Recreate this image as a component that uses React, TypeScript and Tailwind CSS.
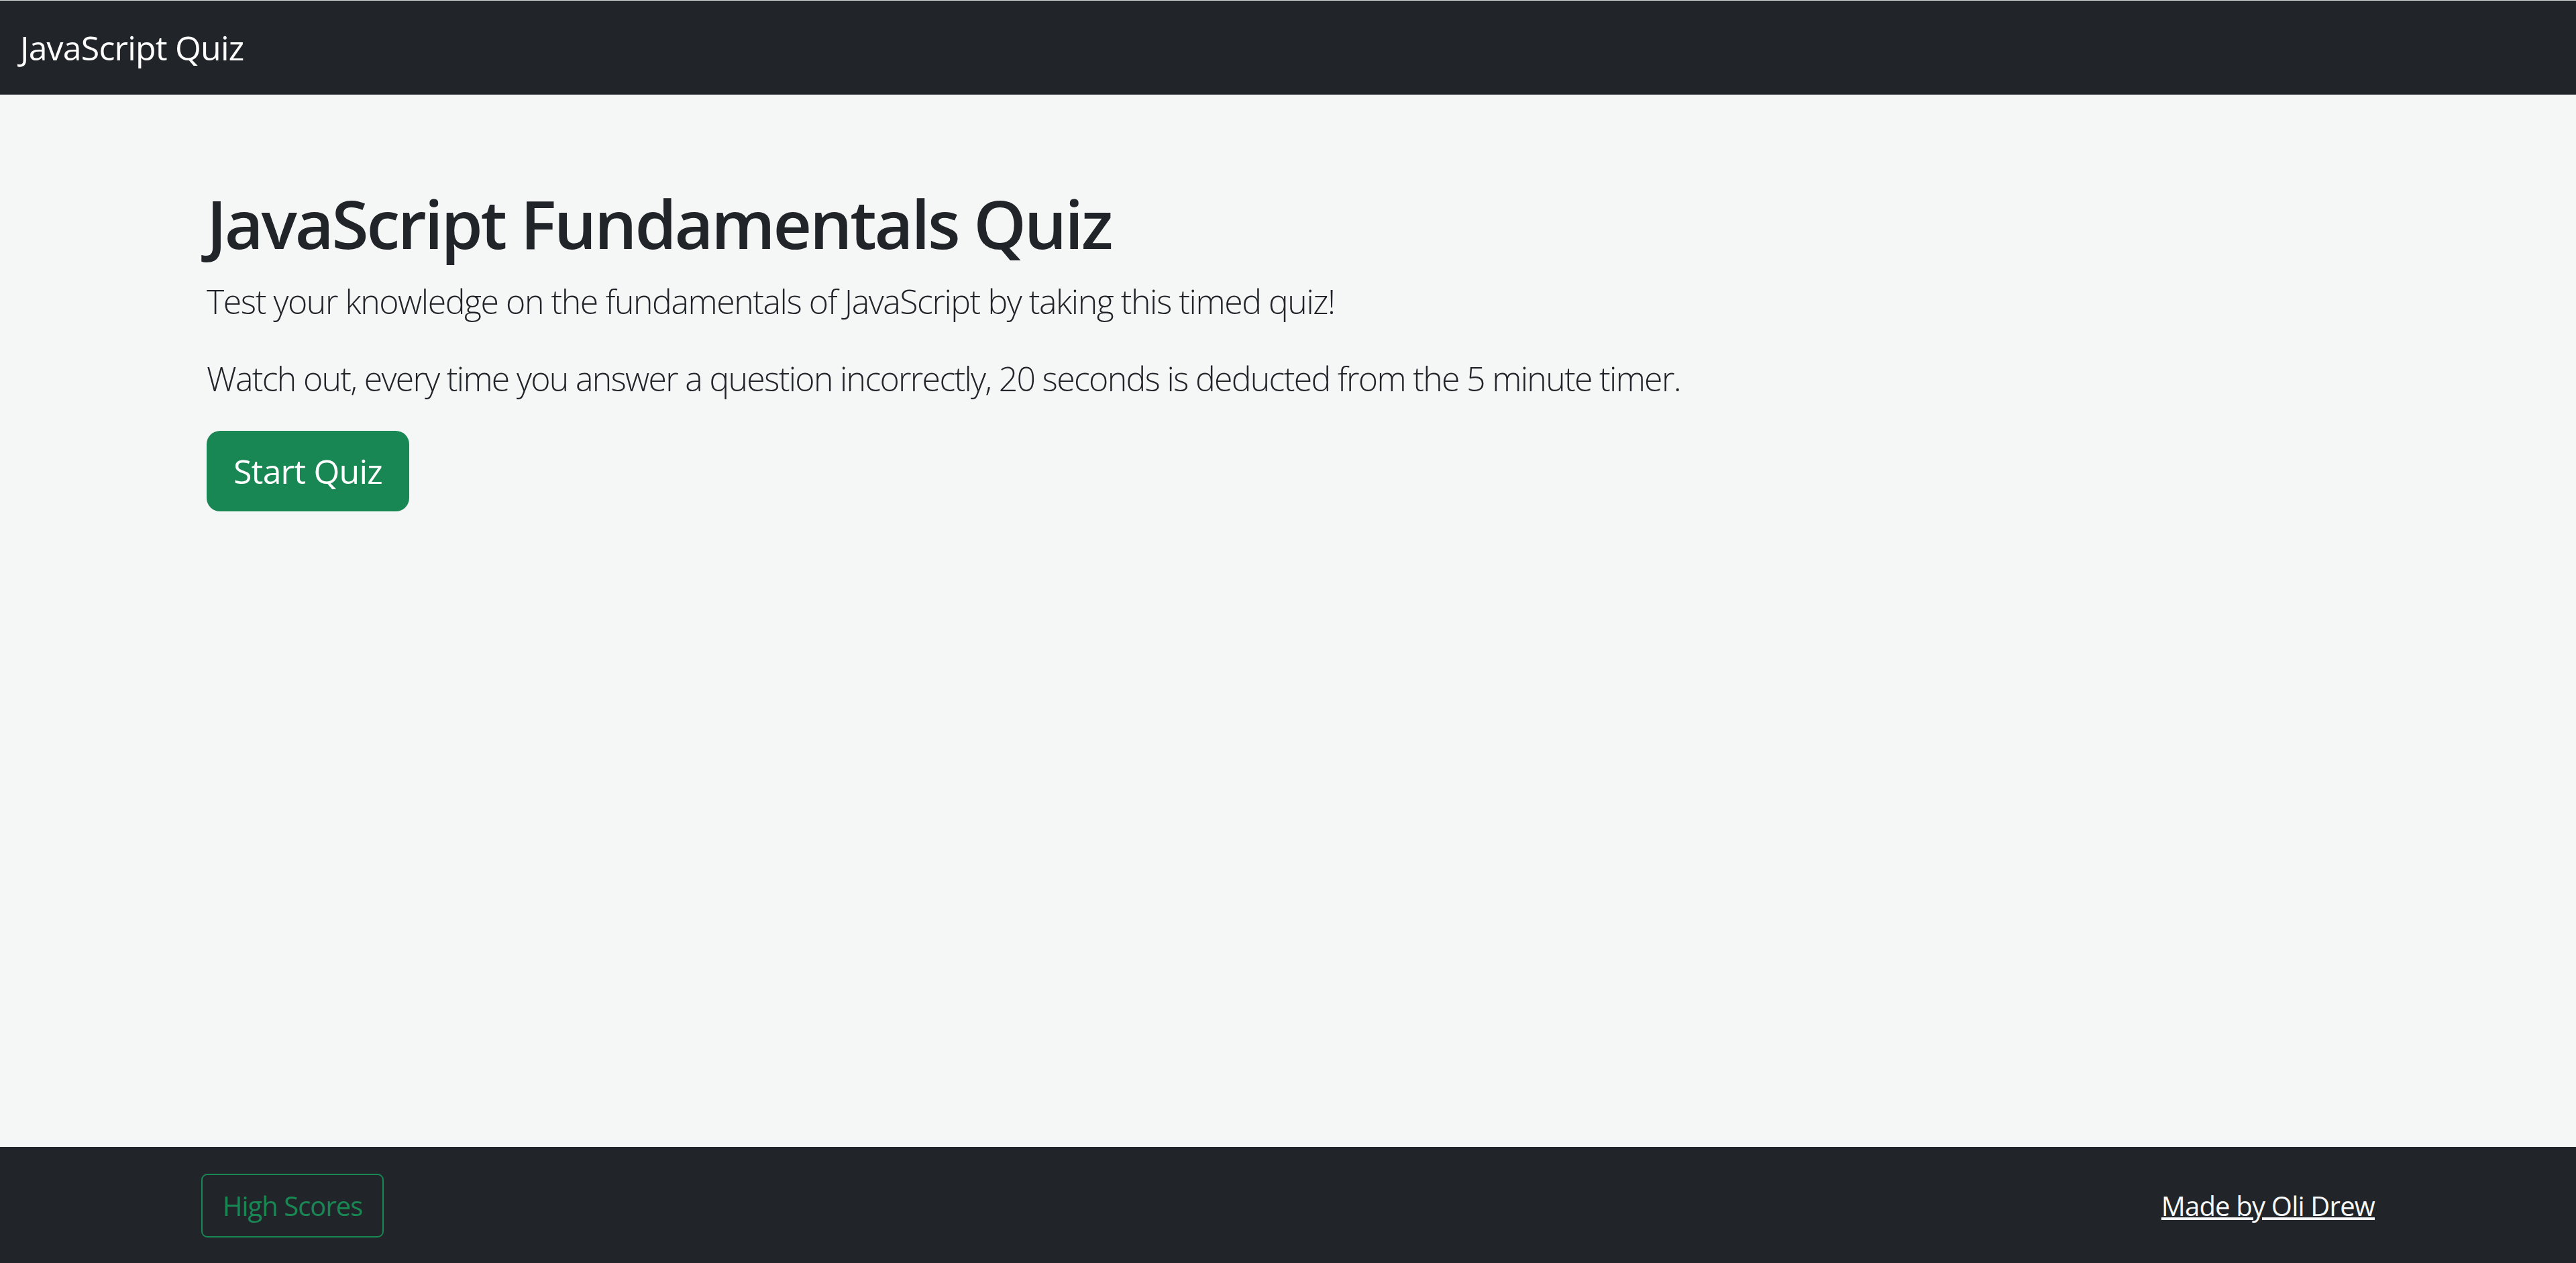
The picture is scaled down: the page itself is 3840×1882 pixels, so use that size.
export default function App() {
  return (
    <div className="min-h-screen flex flex-col bg-[#f5f7f6] font-['Open_Sans',sans-serif] text-[#212529]">
      {/* Navbar */}
      <nav className="h-[141px] border-t border-[#d6d8d7] bg-[#212529] flex items-center px-[30px]">
        <span className="text-[50px] leading-[75px] tracking-[-0.8px] text-white">JavaScript Quiz</span>
      </nav>

      <main className="flex-grow px-[308px] pt-[131px]">
        <h1 className="text-[100px] leading-[120px] font-semibold tracking-[-3.2px] mb-[20px]">
          JavaScript Fundamentals Quiz
        </h1>
        <p className="text-[50px] leading-[75px] font-light tracking-[-1.45px] mb-[40px]">
          Test your knowledge on the fundamentals of JavaScript by taking this timed quiz!
        </p>
        <p className="text-[50px] leading-[75px] font-light tracking-[-1.7px] mb-[40px]">
          Watch out, every time you answer a question incorrectly, 20 seconds is deducted from the 5 minute timer.
        </p>
        <button className="h-[120px] px-[40px] rounded-[20px] bg-[#198754] text-white text-[50px] leading-[75px] tracking-[-0.8px]">
          Start Quiz
        </button>
      </main>

      <footer className="bg-[#212529] pt-[40px] pb-[38px] px-[300px] flex items-center justify-between">
        <button className="h-[95px] px-[30px] rounded-[9px] border-[2.5px] border-[#198754] text-[#198754] text-[40px] leading-[60px] tracking-[-1px]">
          High Scores
        </button>
        <a href="#" className="text-[40px] leading-[60px] tracking-[-0.8px] text-[#f8f9fa] underline">
          Made by Oli Drew
        </a>
      </footer>
    </div>
  );
}
